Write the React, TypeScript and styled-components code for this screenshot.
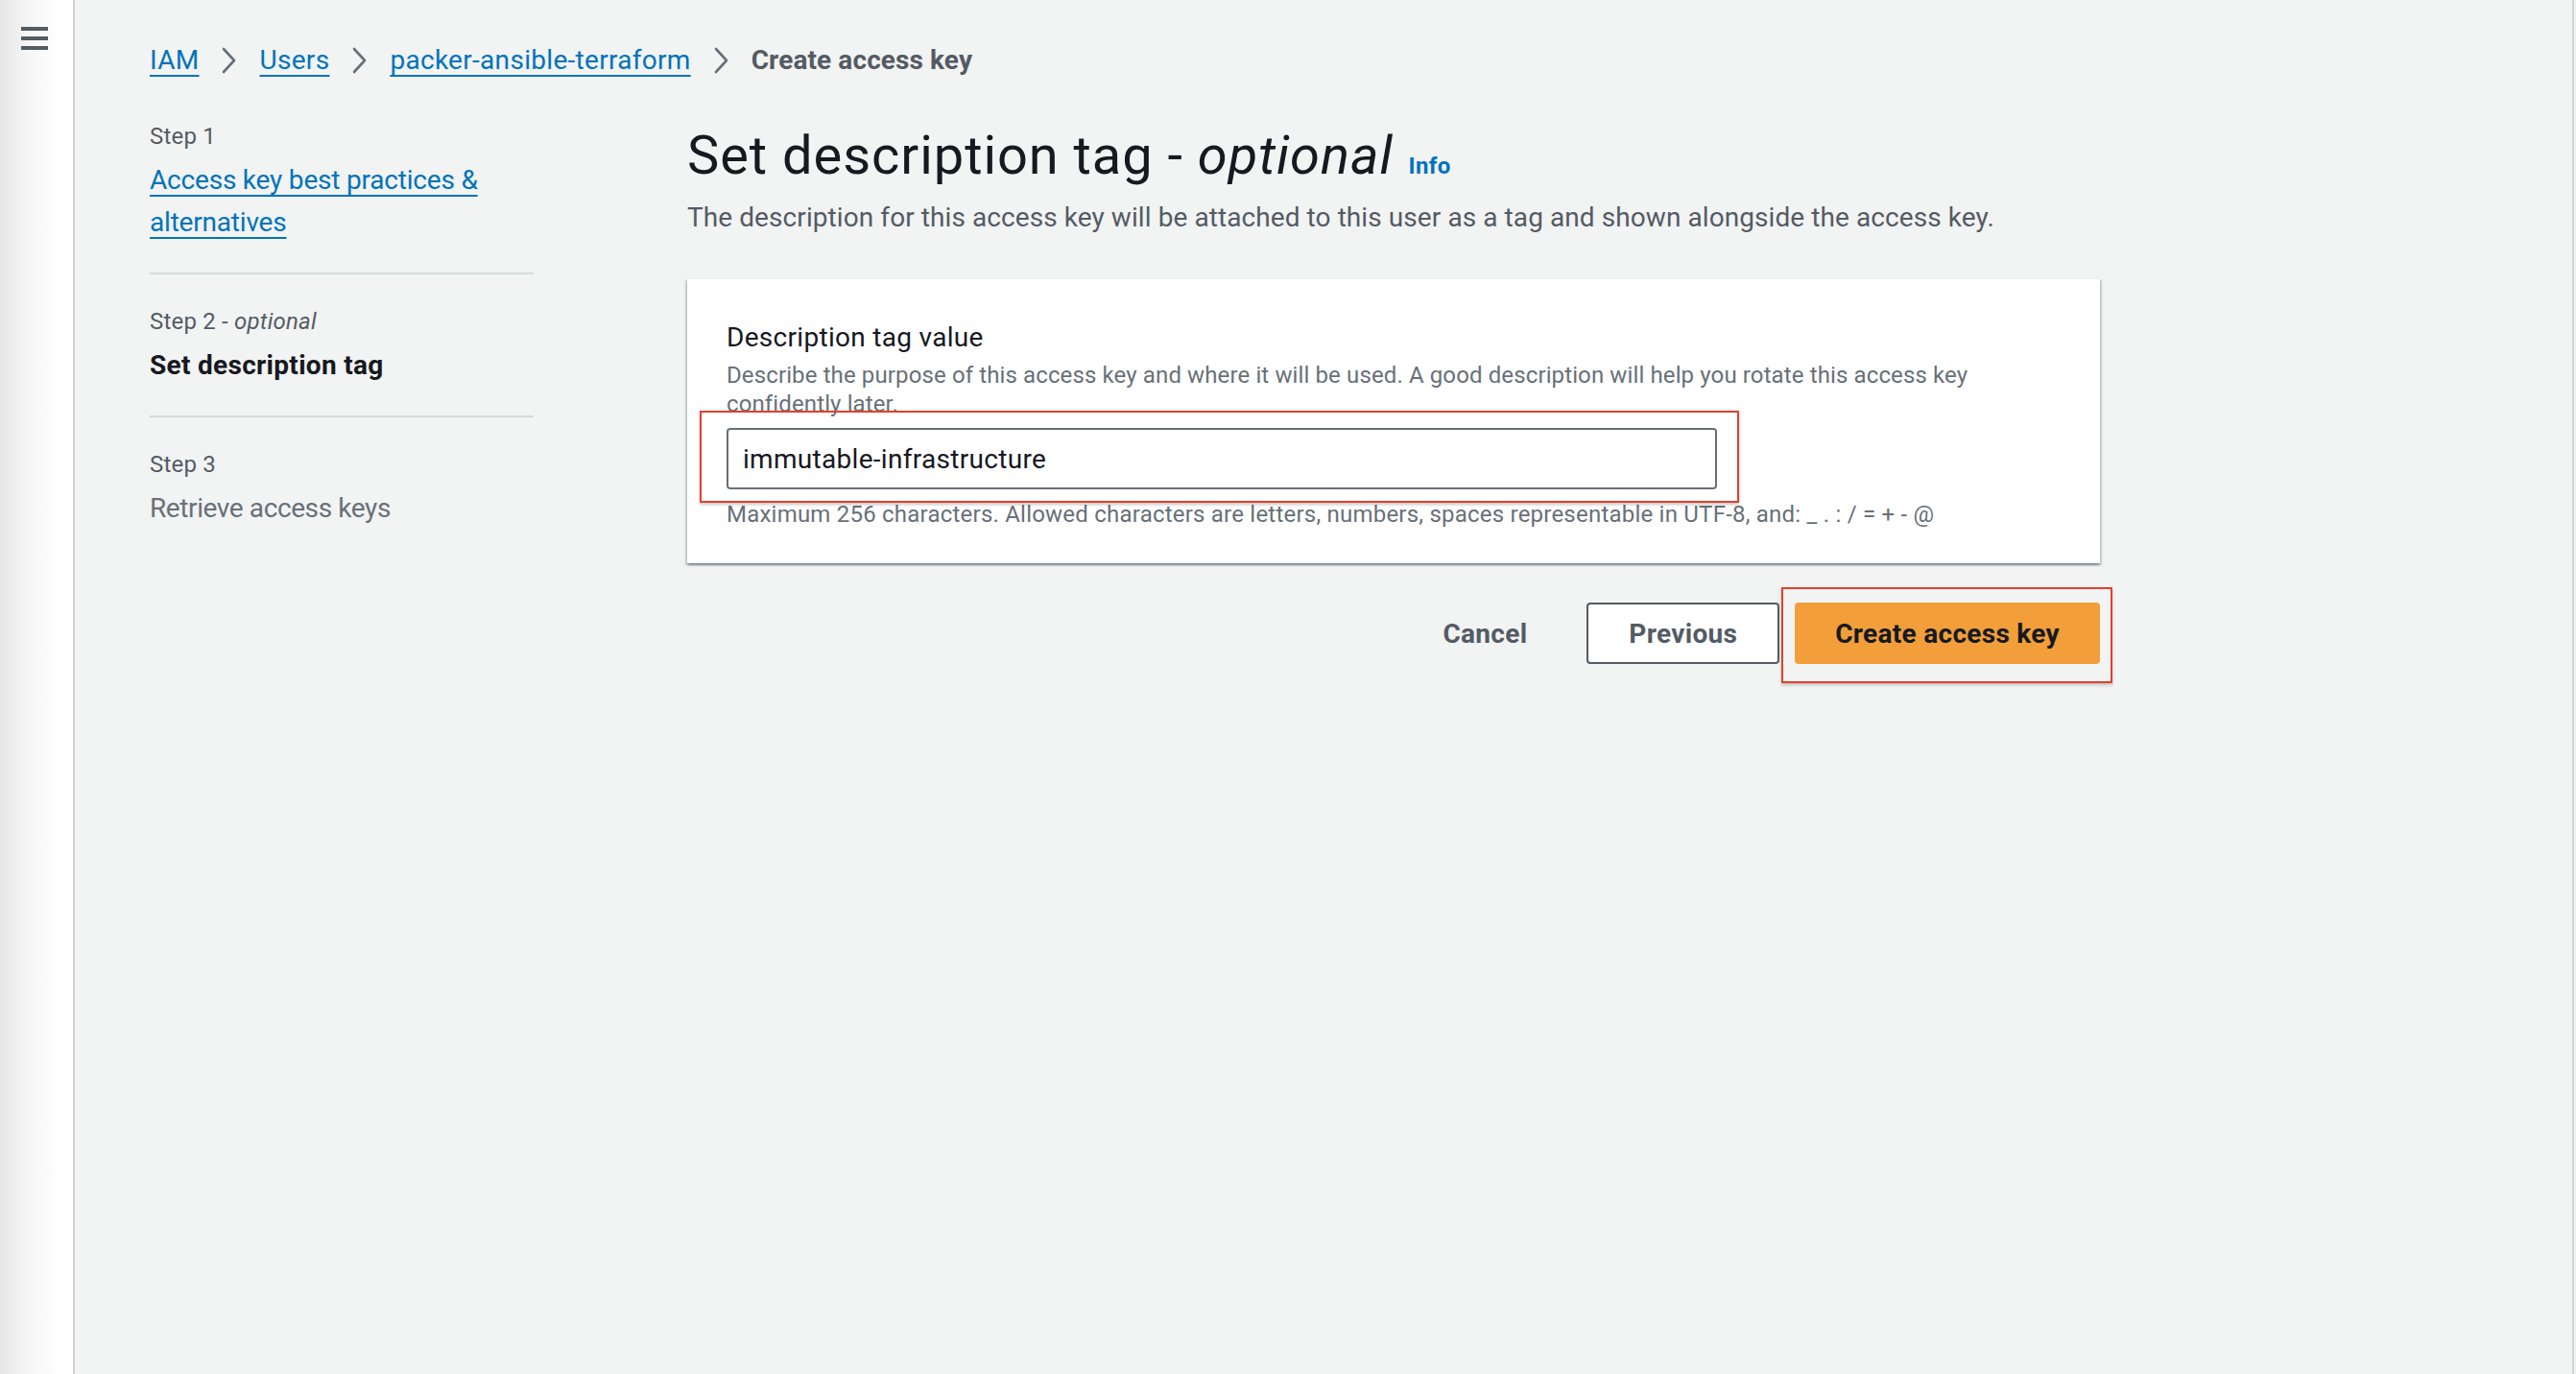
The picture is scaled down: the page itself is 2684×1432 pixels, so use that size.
import React from "react";
import styled, { createGlobalStyle } from "styled-components";

const GlobalStyle = createGlobalStyle`
  html, body {
    margin: 0;
    padding: 0;
    background: #f2f3f3;
  }
  body {
    font-family: Roboto, "Liberation Sans", Arial, sans-serif;
    color: #16191f;
    -webkit-font-smoothing: antialiased;
  }
  * { box-sizing: border-box; }
`;

const Page = styled.div`
  display: flex;
  min-height: 100vh;
  background: #f2f3f3;
`;

const SideRail = styled.aside`
  width: 78px;
  flex: 0 0 78px;
  border-right: 2px solid #cdd1d3;
  background: linear-gradient(to right, #e6e6e6 0px, #f6f6f6 30px, #ffffff 62px);
  padding: 28px 0 0 22px;
`;

const Main = styled.main`
  flex: 1;
  padding: 41px 0 0 78px;
  border-right: 2px solid #d3d6d8;
  margin-right: 2px;
`;

const Breadcrumbs = styled.nav`
  display: flex;
  align-items: center;
  gap: 23px;
  font-size: 28px;
  line-height: 44px;
`;

const CrumbLink = styled.a`
  color: #0073bb;
  text-decoration: underline;
  text-decoration-thickness: 2px;
  text-underline-offset: 6px;
  letter-spacing: 0.3px;
`;

const CrumbCurrent = styled.span`
  color: #545b64;
  font-weight: 700;
  letter-spacing: 0.1px;
`;

const Layout = styled.div`
  display: grid;
  grid-template-columns: 400px 1472px;
  column-gap: 160px;
  margin-top: 41px;
  align-items: start;
`;

const WizardNav = styled.ol`
  list-style: none;
  margin: 0;
  padding: 0;
`;

const StepItem = styled.li<{ $first?: boolean; $last?: boolean }>`
  display: flex;
  flex-direction: column;
  gap: 8px;
  padding-top: ${(p) => (p.$first ? "0" : "33px")};
  padding-bottom: ${(p) => (p.$last ? "0" : "30px")};
  border-bottom: ${(p) => (p.$last ? "none" : "2px solid #d5dbdb")};
`;

const StepLabel = styled.span`
  font-size: 24px;
  line-height: 32px;
  color: #545b64;
  letter-spacing: 0.2px;
  em { font-style: italic; }
`;

const StepLink = styled.a`
  font-size: 28px;
  line-height: 44px;
  color: #0073bb;
  text-decoration: underline;
  text-decoration-thickness: 2px;
  text-underline-offset: 6px;
  letter-spacing: -0.2px;
`;

const StepTitle = styled.span<{ $active?: boolean }>`
  font-size: 28px;
  line-height: 44px;
  font-weight: ${(p) => (p.$active ? 700 : 400)};
  color: ${(p) => (p.$active ? "#16191f" : "#687078")};
  letter-spacing: ${(p) => (p.$active ? "0.3px" : "-0.4px")};
`;

const Content = styled.section`
  display: flex;
  flex-direction: column;
`;

const Title = styled.h1`
  margin: 0;
  font-size: 56px;
  line-height: 72px;
  font-weight: 400;
  color: #16191f;
  letter-spacing: 0.95px;
  em { font-style: italic; }
`;

const InfoLink = styled.a`
  display: inline-block;
  margin-left: 16px;
  font-size: 24px;
  font-weight: 700;
  color: #0073bb;
  text-decoration: none;
  vertical-align: baseline;
  letter-spacing: 0.4px;
`;

const PageDescription = styled.p`
  margin: -4px 0 0;
  font-size: 28px;
  line-height: 44px;
  color: #545b64;
  letter-spacing: 0.08px;
`;

const Card = styled.div`
  margin-top: 41px;
  background: #ffffff;
  padding: 39px 40px 36px 41px;
  border-top: 1px solid #eaeded;
  box-shadow: 0 2px 2px 0 rgba(0, 28, 36, 0.3), 2px 2px 2px 0 rgba(0, 28, 36, 0.15),
    -2px 2px 2px 0 rgba(0, 28, 36, 0.15);
`;

const FieldLabel = styled.label`
  display: block;
  font-size: 28px;
  line-height: 44px;
  color: #16191f;
  letter-spacing: 0.3px;
`;

const FieldHint = styled.p<{ $gap?: number; $spacing?: number }>`
  margin: ${(p) => p.$gap ?? 2}px 0 0;
  font-size: 24px;
  line-height: 30px;
  color: #687078;
  letter-spacing: ${(p) => p.$spacing ?? 0.12}px;
`;

const InputWrap = styled.div`
  position: relative;
  width: 1032px;
  margin-top: 10px;
`;

const TextInput = styled.input`
  display: block;
  width: 100%;
  height: 64px;
  padding: 0 15px;
  border: 2px solid #687078;
  border-radius: 4px;
  background: #fff;
  font-family: Roboto, "Liberation Sans", Arial, sans-serif;
  font-size: 28px;
  color: #16191f;
  letter-spacing: 0.3px;
  outline: none;
`;

const Highlight = styled.span<{ $t: number; $r: number; $b: number; $l: number }>`
  position: absolute;
  top: ${(p) => -p.$t}px;
  right: ${(p) => -p.$r}px;
  bottom: ${(p) => -p.$b}px;
  left: ${(p) => -p.$l}px;
  border: 2px solid #e4402c;
  box-shadow: 0 2px 3px rgba(0, 0, 0, 0.22);
  pointer-events: none;
`;

const Actions = styled.div`
  display: flex;
  justify-content: flex-end;
  align-items: center;
  gap: 16px;
  margin-top: 41px;
`;

const ButtonWrap = styled.div`
  position: relative;
`;

const Button = styled.button<{ $variant: "link" | "normal" | "primary" }>`
  display: inline-flex;
  align-items: center;
  justify-content: center;
  height: 64px;
  padding: 0 ${(p) => (p.$variant === "link" ? 44 : p.$variant === "normal" ? 42 : 40)}px;
  border-radius: 4px;
  font-family: Roboto, "Liberation Sans", Arial, sans-serif;
  font-size: 28px;
  font-weight: 700;
  letter-spacing: 0.3px;
  cursor: pointer;
  border: 2px solid
    ${(p) =>
      p.$variant === "primary" ? "#f29e3a" : p.$variant === "normal" ? "#545b64" : "transparent"};
  background: ${(p) =>
    p.$variant === "primary" ? "#f29e3a" : p.$variant === "normal" ? "#ffffff" : "transparent"};
  color: ${(p) => (p.$variant === "primary" ? "#16191f" : "#545b64")};
`;

const MenuIcon = () => (
  <svg width="28" height="24" viewBox="0 0 28 24" aria-hidden="true">
    <rect x="0" y="0" width="28" height="4" fill="#545b64" />
    <rect x="0" y="10" width="28" height="4" fill="#545b64" />
    <rect x="0" y="20" width="28" height="4" fill="#545b64" />
  </svg>
);

const Chevron = () => (
  <svg width="17" height="28" viewBox="0 0 17 28" aria-hidden="true">
    <path d="M3 2 L14 14 L3 26" fill="none" stroke="#687078" strokeWidth="2.6" strokeLinecap="round" strokeLinejoin="round" />
  </svg>
);

export default function App() {
  return (
    <>
      <GlobalStyle />
      <Page>
        <SideRail>
          <MenuIcon />
        </SideRail>
        <Main>
          <Breadcrumbs>
            <CrumbLink href="#">IAM</CrumbLink>
            <Chevron />
            <CrumbLink href="#">Users</CrumbLink>
            <Chevron />
            <CrumbLink href="#">packer-ansible-terraform</CrumbLink>
            <Chevron />
            <CrumbCurrent>Create access key</CrumbCurrent>
          </Breadcrumbs>
          <Layout>
            <WizardNav>
              <StepItem $first>
                <StepLabel>Step 1</StepLabel>
                <StepLink href="#">Access key best practices &amp; alternatives</StepLink>
              </StepItem>
              <StepItem>
                <StepLabel>
                  Step 2 - <em>optional</em>
                </StepLabel>
                <StepTitle $active>Set description tag</StepTitle>
              </StepItem>
              <StepItem $last>
                <StepLabel>Step 3</StepLabel>
                <StepTitle>Retrieve access keys</StepTitle>
              </StepItem>
            </WizardNav>
            <Content>
              <Title>
                Set description tag - <em>optional</em>
                <InfoLink href="#">Info</InfoLink>
              </Title>
              <PageDescription>
                The description for this access key will be attached to this user as a tag and shown alongside the access key.
              </PageDescription>
              <Card>
                <FieldLabel htmlFor="desc-tag">Description tag value</FieldLabel>
                <FieldHint>
                  Describe the purpose of this access key and where it will be used. A good description will help you rotate this access key confidently later.
                </FieldHint>
                <InputWrap>
                  <TextInput id="desc-tag" defaultValue="immutable-infrastructure" />
                  <Highlight $t={18} $r={23} $b={14} $l={28} />
                </InputWrap>
                <FieldHint $gap={11} $spacing={0.22}>
                  Maximum 256 characters. Allowed characters are letters, numbers, spaces representable in UTF-8, and: _ . : / = + - @
                </FieldHint>
              </Card>
              <Actions>
                <Button $variant="link">Cancel</Button>
                <Button $variant="normal">Previous</Button>
                <ButtonWrap>
                  <Button $variant="primary">Create access key</Button>
                  <Highlight $t={16} $r={13} $b={20} $l={14} />
                </ButtonWrap>
              </Actions>
            </Content>
          </Layout>
        </Main>
      </Page>
    </>
  );
}
